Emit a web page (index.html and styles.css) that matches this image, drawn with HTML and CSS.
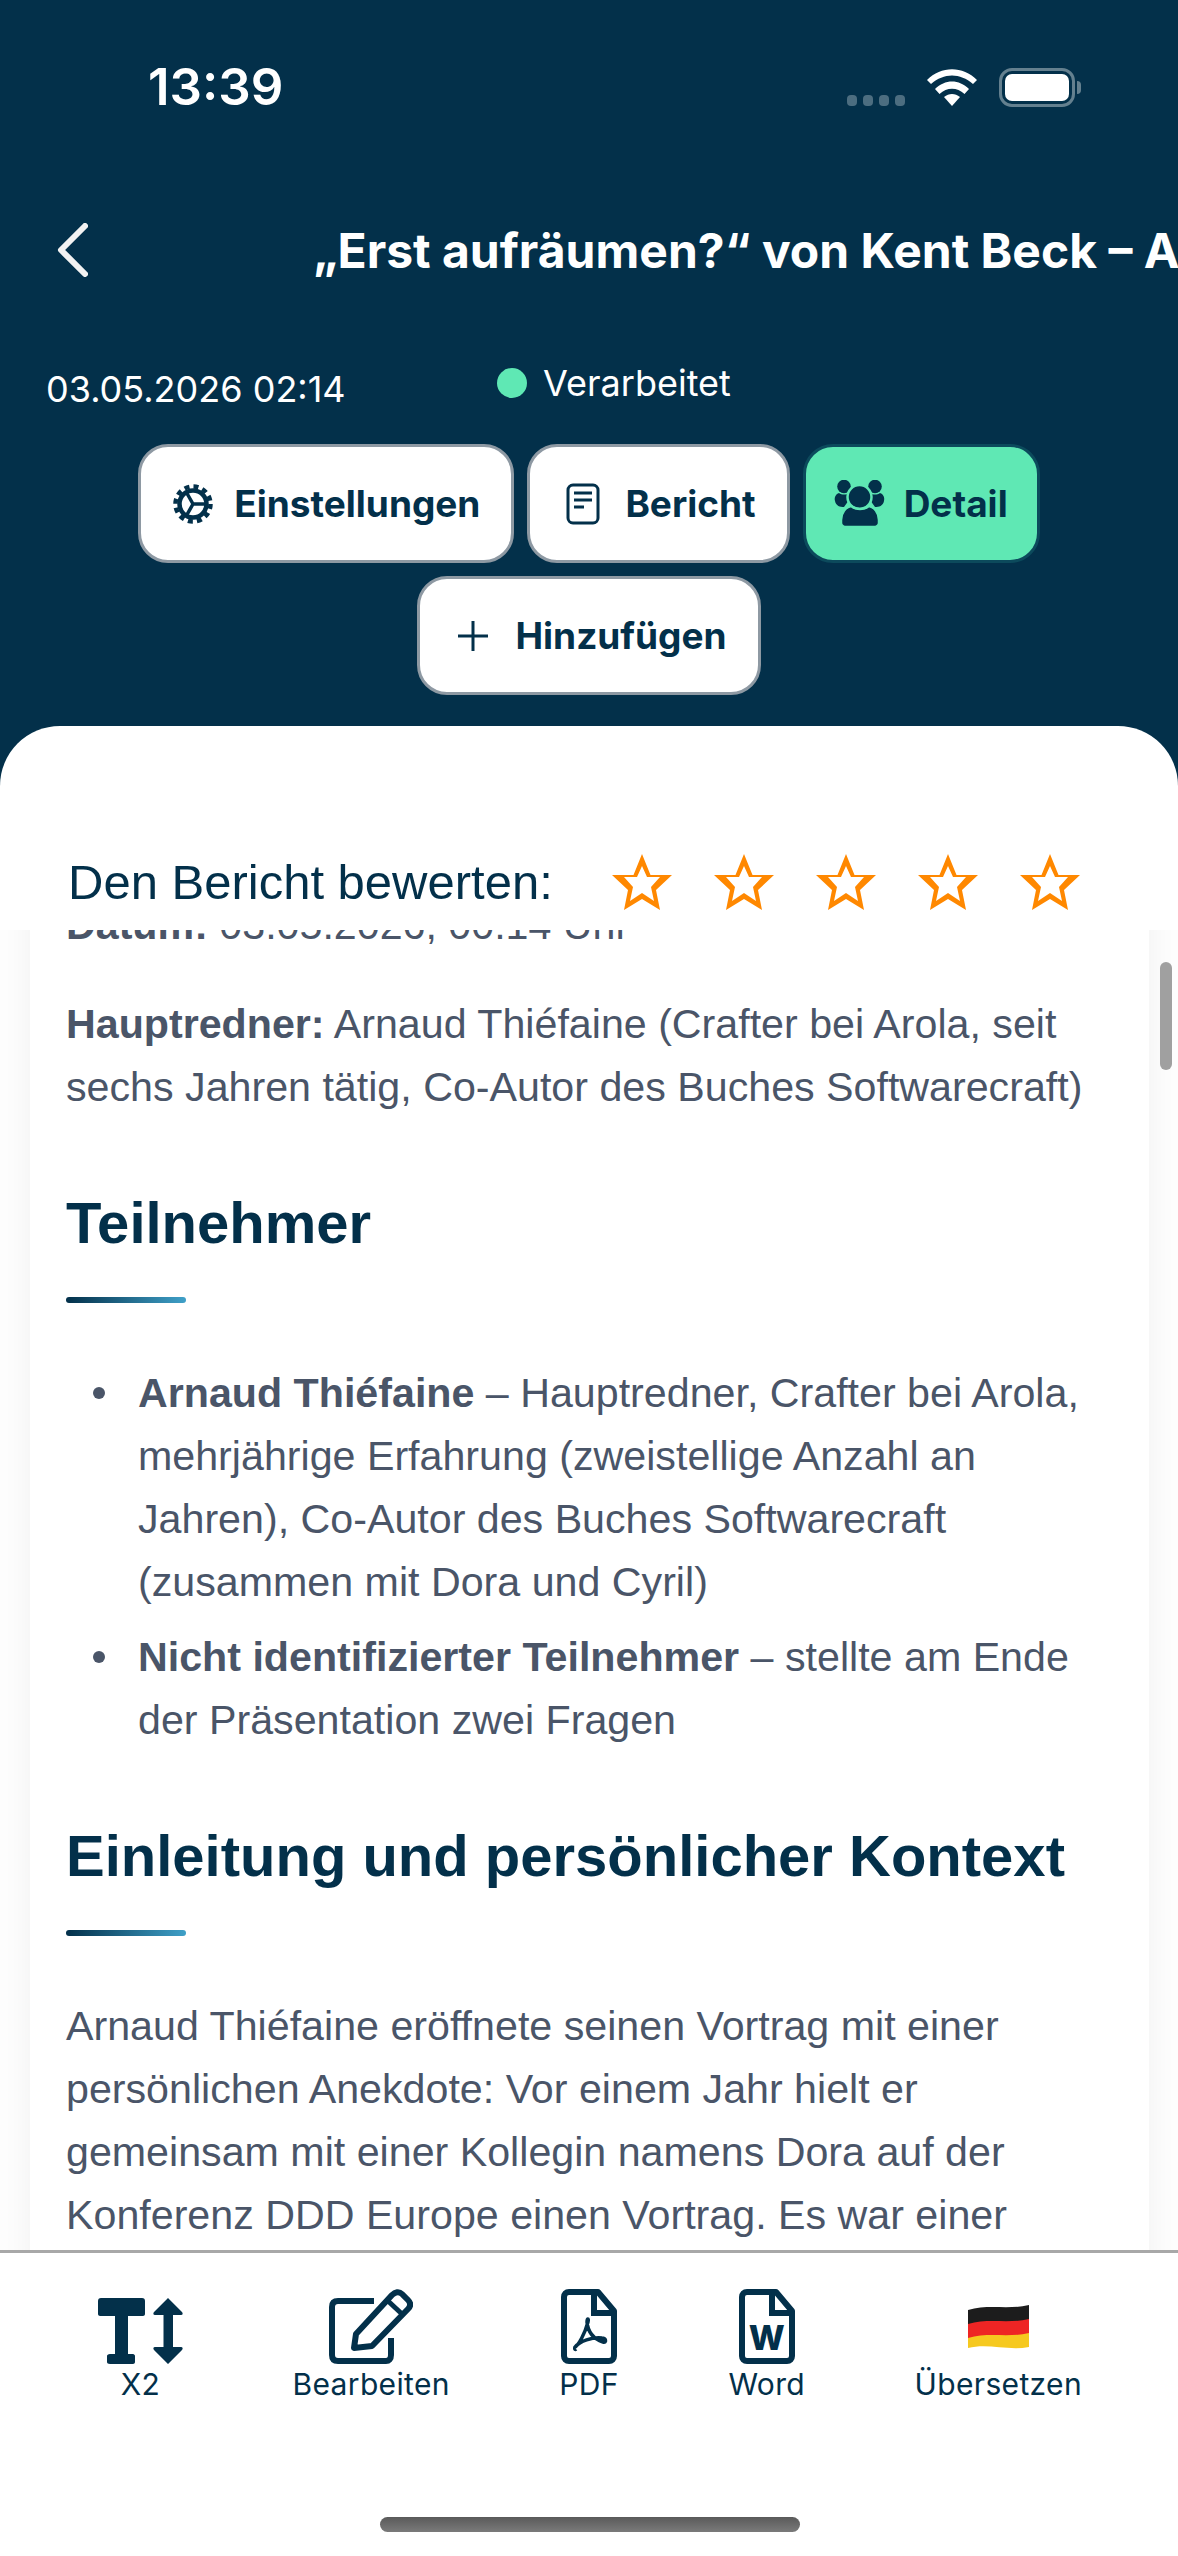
FILE: index.html
```html
<!DOCTYPE html>
<html lang="de">
<head>
    <meta charset="UTF-8">
    <meta name="viewport" content="width=device-width, initial-scale=1.0">
    <title>Bericht</title>
    <link rel="stylesheet" href="styles.css">
</head>
<body>
<div class="app">
    <header class="top">
        <div class="status">
            <span class="time">13:39</span>
            <div class="status-icons">
                <div class="signal"><i></i><i></i><i></i><i></i></div>
                <svg class="wifi" width="50" height="37" viewBox="0 0 50 37" fill="#fff">
                    <path d="M0 11C14 -3.500 36 -3.500 50 11L46 15C33 3.500 17 3.500 4 15Z"/>
                    <path d="M8 20C18 10 32 10 42 20L37.500 25C30 18 20 18 12.500 25Z"/>
                    <path d="M17 28C22 24 28 24 33 28L25 37Z"/>
                </svg>
                <div class="battery"><div class="battery-fill"></div></div>
            </div>
        </div>
        <div class="nav">
            <svg class="back" width="31" height="54" viewBox="0 0 31 54"><path d="M28 3L4 27L28 51" fill="none" stroke="#f2f2f2" stroke-width="6" stroke-linecap="round" stroke-linejoin="round"/></svg>
            <div class="title">„Erst aufräumen?“ von Kent Beck – Arnaud Thiéfaine</div>
        </div>
        <div class="meta">
            <span class="date">03.05.2026 02:14</span>
            <span class="state"><i class="dot"></i>Verarbeitet</span>
        </div>
        <div class="actions">
            <button class="btn">
                <svg width="42" height="42" viewBox="0 0 42 42" fill="none" stroke="#03304a">
                    <circle cx="21" cy="21" r="13.500" stroke-width="4.500"/>
                    <circle cx="21" cy="21" r="17.500" stroke-width="4.500" stroke-dasharray="5 4.160"/>
                    <path d="M21 21H34M21 21L14.500 9.500M21 21L14.500 32.500" stroke-width="3.500"/>
                </svg>
                Einstellungen
            </button>
            <button class="btn">
                <svg width="44" height="42" viewBox="0 0 44 42" fill="none" stroke="#03304a">
                    <rect x="7" y="2" width="30" height="38" rx="5" stroke-width="3"/>
                    <path d="M13 10H31M13 17H31M13 24H23" stroke-width="3"/>
                </svg>
                Bericht
            </button>
            <button class="btn btn-active">
                <svg width="52" height="47" viewBox="0 0 52 47" fill="#03304a">
                    <circle cx="10" cy="6.500" r="6.800"/>
                    <circle cx="41" cy="6.500" r="6.800"/>
                    <path d="M1 21C0 17 2 14 5 13C8 15 12 15 15 13V20L10 27C6 27 2 26 1 21Z"/>
                    <path d="M50 21C51 17 49 14 46 13C43 15 39 15 36 13V20L41 27C45 27 49 26 50 21Z"/>
                    <g stroke="#5fe8b4" stroke-width="2.500">
                        <circle cx="25.500" cy="17" r="12"/>
                        <path d="M7 40C7 32 12 27 17 26C22 30 30 30 35 26C40 27 45 32 45 40V43C45 45 43 47 41 47H11C9 47 7 45 7 43Z"/>
                    </g>
                </svg>
                Detail
            </button>
            <button class="btn">
                <svg width="44" height="32" viewBox="0 0 44 32" fill="none" stroke="#03304a" stroke-width="3"><path d="M22 1V31M7 16H37"/></svg>
                Hinzufügen
            </button>
        </div>
    </header>

    <section class="sheet">
        <div class="rating">
            <span class="rating-label">Den Bericht bewerten:</span>
            <div class="stars">
                <svg class="star" viewBox="0 0 60 56"><path d="M30 0L38.500 21H60L44 36L48 56L30 45L12 56L16 36L0 21H21.500ZM30 12L25 23H12L21 33L18 47L30 39L42 47L39 33L48 23H35Z"/></svg>
                <svg class="star" viewBox="0 0 60 56"><path d="M30 0L38.500 21H60L44 36L48 56L30 45L12 56L16 36L0 21H21.500ZM30 12L25 23H12L21 33L18 47L30 39L42 47L39 33L48 23H35Z"/></svg>
                <svg class="star" viewBox="0 0 60 56"><path d="M30 0L38.500 21H60L44 36L48 56L30 45L12 56L16 36L0 21H21.500ZM30 12L25 23H12L21 33L18 47L30 39L42 47L39 33L48 23H35Z"/></svg>
                <svg class="star" viewBox="0 0 60 56"><path d="M30 0L38.500 21H60L44 36L48 56L30 45L12 56L16 36L0 21H21.500ZM30 12L25 23H12L21 33L18 47L30 39L42 47L39 33L48 23H35Z"/></svg>
                <svg class="star" viewBox="0 0 60 56"><path d="M30 0L38.500 21H60L44 36L48 56L30 45L12 56L16 36L0 21H21.500ZM30 12L25 23H12L21 33L18 47L30 39L42 47L39 33L48 23H35Z"/></svg>
            </div>
        </div>
        <div class="scroll">
            <div class="scrollbar"></div>
            <article class="card">
                <p><b>Datum:</b> 03.05.2026, 00:14 Uhr</p>
                <p><b>Hauptredner:</b> Arnaud Thiéfaine (Crafter bei Arola, seit sechs Jahren tätig, Co-Autor des Buches Softwarecraft)</p>
                <h2>Teilnehmer</h2>
                <ul>
                    <li><b>Arnaud Thiéfaine</b> – Hauptredner, Crafter bei Arola, mehrjährige Erfahrung (zweistellige Anzahl an Jahren), Co-Autor des Buches Softwarecraft (zusammen mit Dora und Cyril)</li>
                    <li><b>Nicht identifizierter Teilnehmer</b> – stellte am Ende der Präsentation zwei Fragen</li>
                </ul>
                <h2>Einleitung und persönlicher Kontext</h2>
                <p>Arnaud Thiéfaine eröffnete seinen Vortrag mit einer persönlichen Anekdote: Vor einem Jahr hielt er gemeinsam mit einer Kollegin namens Dora auf der Konferenz DDD Europe einen Vortrag. Es war einer</p>
            </article>
        </div>
    </section>

    <footer class="toolbar">
        <div class="tools">
            <div class="tool">
                <svg width="85" height="66" viewBox="0 0 85 66" fill="#03304a">
                    <path d="M3 0H44C46 0 47 1 47 3V16C47 17 46 18 45 18H30V56H35C36 56 37 57 37 58V64C37 65 36 66 35 66H12C10 66 9 65 9 64V58C9 57 10 56 12 56H17V18H2C1 18 0 17 0 16V3C0 1 1 0 3 0Z"/>
                    <path d="M70 0L84 14C85 15 85 17 83 17H75V49H83C85 49 85 51 84 52L70 66L56 52C55 51 55 49 57 49H65.500V17H57C55 17 55 15 56 14Z"/>
                </svg>
                <span>X2</span>
            </div>
            <div class="tool">
                <svg width="84" height="75" viewBox="0 0 84 75" fill="none" stroke="#03304a" stroke-width="6">
                    <path d="M45 12H9C5 12 3 14 3 18V66C3 70 5 72 9 72H57C60 72 62 70 62 66V49"/>
                    <path d="M27 45L63 6C66 3 70 2 73 5L79 11C82 14 82 17 79 20L43 57L25 59Z" stroke-linejoin="round"/>
                    <path d="M59 12L73 25" stroke-width="5"/>
                </svg>
                <span>Bearbeiten</span>
            </div>
            <div class="tool">
                <svg width="56" height="75" viewBox="0 0 56 75" fill="none" stroke="#03304a">
                    <path d="M8 3H37L53 22V67C53 70 51 72 48 72H8C5 72 3 70 3 67V8C3 5 5 3 8 3Z" stroke-width="6" stroke-linejoin="round"/>
                    <path d="M33 4V24H52" stroke-width="6"/>
                    <path d="M13 59C18 56 24 44 27 33C28 29 26 29 26 33C27 44 33 50 42 53C46 54 45 49 41 49C31 48 19 52 14 58C13 60 14 61 15 60" stroke-width="3.500"/>
                </svg>
                <span>PDF</span>
            </div>
            <div class="tool">
                <svg width="56" height="75" viewBox="0 0 56 75" fill="none" stroke="#03304a">
                    <path d="M8 3H37L53 22V67C53 70 51 72 48 72H8C5 72 3 70 3 67V8C3 5 5 3 8 3Z" stroke-width="6" stroke-linejoin="round"/>
                    <path d="M33 4V24H52" stroke-width="6"/>
                    <text class="word-w" x="28" y="61" text-anchor="middle">W</text>
                </svg>
                <span>Word</span>
            </div>
            <div class="tool">
                <svg class="flag" width="61" height="44" viewBox="0 0 61 44">
                    <path d="M0 5C20 -1 40 5 61 0V15C40 20 20 14 0 20Z" fill="#1c1c1c"/>
                    <path d="M0 19C20 13 40 19 61 14V29C40 34 20 28 0 34Z" fill="#ee2524"/>
                    <path d="M0 33C20 27 40 33 61 28V42C40 46 20 38 0 43Z" fill="#f6c91f"/>
                </svg>
                <span>Übersetzen</span>
            </div>
        </div>
        <div class="home"></div>
    </footer>
</div>
</body>
</html>
```

FILE: styles.css
```css
* {
    box-sizing: border-box;
}
html, body {
    margin: 0;
    padding: 0;
}
.app {
    width: 1178px;
    height: 2556px;
    display: flex;
    flex-direction: column;
    overflow: hidden;
    background-color: #03304a;
    font-family: Inter, sans-serif;
}

/* header */
.top {
    height: 726px;
    color: #fff;
}
.status {
    height: 176px;
    padding: 58px 103px 0 148px;
    display: flex;
    justify-content: space-between;
    align-items: flex-start;
}
.time {
    font-size: 51px;
    font-weight: 600;
    line-height: 58px;
}
.status-icons {
    display: flex;
    align-items: flex-end;
    margin-top: 10px;
}
.signal {
    display: flex;
    gap: 6px;
    margin-right: 22px;
    margin-bottom: 1px;
}
.signal i {
    width: 10px;
    height: 11px;
    border-radius: 4px;
    background-color: #4c6d80;
}
.wifi {
    margin-right: 22px;
    margin-bottom: 1px;
}
.battery {
    width: 76px;
    height: 39px;
    border: 3px solid #64808f;
    border-radius: 13px;
    padding: 3px;
    position: relative;
}
.battery::after {
    content: "";
    position: absolute;
    right: -9px;
    top: 10px;
    width: 4px;
    height: 13px;
    border-radius: 0 5px 5px 0;
    background-color: #64808f;
}
.battery-fill {
    height: 100%;
    border-radius: 7px;
    background-color: #fff;
}
.nav {
    display: flex;
    align-items: center;
    height: 54px;
    margin-top: 47px;
    padding-left: 57px;
    overflow: hidden;
}
.back {
    flex: none;
    margin-right: 225px;
}
.title {
    font-size: 48px;
    font-weight: 700;
    white-space: nowrap;
}
.meta {
    display: flex;
    align-items: flex-start;
    margin-top: 88px;
    padding-left: 46px;
    height: 36px;
    font-size: 36px;
    line-height: 36px;
}
.date {
    width: 451px;
    padding-top: 6px;
}
.state {
    display: flex;
    align-items: center;
}
.dot {
    width: 30px;
    height: 30px;
    border-radius: 50%;
    background-color: #5fe8b4;
    margin-right: 16px;
}
.actions {
    display: flex;
    flex-wrap: wrap;
    justify-content: center;
    gap: 13px;
    width: 960px;
    margin: 43px auto 0;
}
.btn {
    height: 119px;
    display: flex;
    align-items: center;
    gap: 20px;
    padding: 0 31px;
    border: 3px solid #8e99a3;
    border-radius: 30px;
    background-color: #fff;
    color: #03304a;
    font-family: Inter, sans-serif;
    font-size: 37px;
    font-weight: 700;
}
.btn-active {
    background-color: #5fe8b4;
    border-color: #0c4a5c;
    padding: 0 29px 0 28px;
    gap: 18px;
}

/* white sheet */
.sheet {
    flex: 1;
    min-height: 0;
    display: flex;
    flex-direction: column;
    background-color: #fff;
    border-radius: 60px 60px 0 0;
}
.rating {
    height: 204px;
    flex: none;
    display: flex;
    align-items: center;
    justify-content: space-between;
    padding: 108px 98px 0 68px;
}
.rating-label {
    font-family: "Liberation Sans", sans-serif;
    font-size: 49px;
    color: #03304a;
}
.stars {
    display: flex;
    gap: 42px;
}
.star {
    width: 60px;
    height: 56px;
    fill: #ff8800;
    fill-rule: evenodd;
}
.scroll {
    flex: 1;
    min-height: 0;
    position: relative;
    overflow: hidden;
    background-color: #fdfdfd;
    padding: 0 29px 0 30px;
}
.scrollbar {
    position: absolute;
    right: 6px;
    top: 32px;
    width: 12px;
    height: 108px;
    border-radius: 6px;
    background-color: #a0a0a0;
}
.card {
    margin-top: -36px;
    padding: 0 36px 120px;
    background-color: #fff;
    box-shadow: 0 0 30px rgba(0, 0, 0, 0.05);
    font-family: "Liberation Sans", sans-serif;
    font-size: 41.200px;
    line-height: 63px;
    color: #4a5568;
}
.card p {
    margin: 0 0 36px;
}
.card h2 {
    margin: 69px 0 104px;
    font-size: 58px;
    line-height: 70px;
    color: #03304a;
    position: relative;
}
.card h2::after {
    content: "";
    position: absolute;
    left: 0;
    bottom: -45px;
    width: 120px;
    height: 6px;
    border-radius: 3px;
    background: linear-gradient(90deg, #03304a, #3fa0c8);
}
.card ul {
    margin: 0 0 36px;
    padding-left: 72px;
    list-style: none;
}
.card li {
    margin-bottom: 12px;
    position: relative;
}
.card li::before {
    content: "";
    position: absolute;
    left: -45px;
    top: 25px;
    width: 12px;
    height: 12px;
    border-radius: 50%;
    background-color: #4a5568;
}

/* bottom toolbar */
.toolbar {
    height: 306px;
    flex: none;
    background-color: #fff;
    border-top: 3px solid #a8a8a8;
    position: relative;
}
.tools {
    display: flex;
    justify-content: space-between;
    align-items: flex-end;
    padding: 36px 96px 0 98px;
}
.tool {
    display: flex;
    flex-direction: column;
    align-items: center;
    color: #03304a;
    font-size: 30px;
    letter-spacing: 0.350px;
    line-height: 34px;
    gap: 3px;
}
.flag {
    margin-bottom: 15px;
}
.word-w {
    font-family: Inter, sans-serif;
    font-size: 34px;
    font-weight: 800;
    fill: #03304a;
    stroke: none;
}
.home {
    position: absolute;
    left: 380px;
    top: 264px;
    width: 420px;
    height: 15px;
    border-radius: 8px;
    background: linear-gradient(#5a5a5a, #7a7a7a);
}
```
